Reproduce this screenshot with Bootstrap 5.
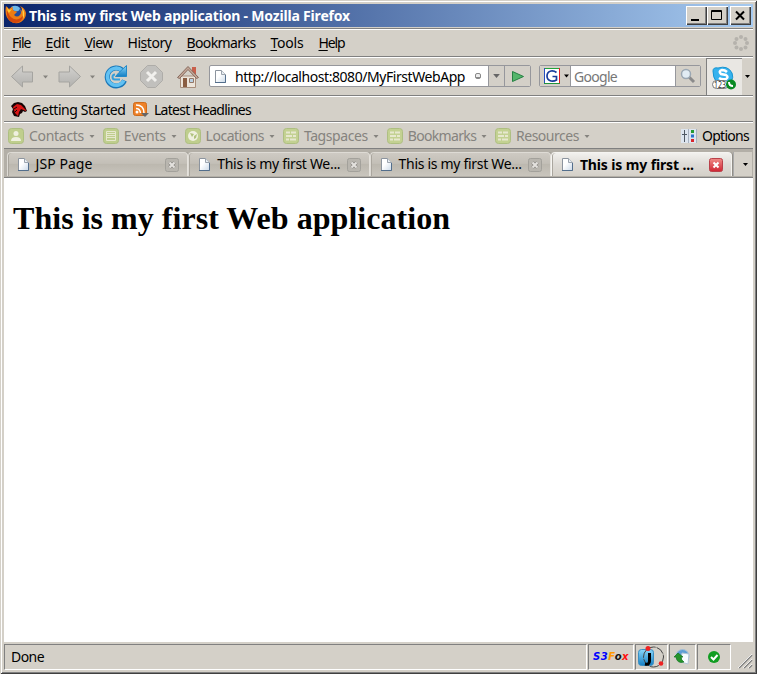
<!DOCTYPE html>
<html lang="en">
<head>
<meta charset="utf-8">
<title>This is my first Web application</title>
<link href="https://cdn.jsdelivr.net/npm/bootstrap@5.3.0/dist/css/bootstrap.min.css" rel="stylesheet">
<style>
body{font:14px/18px "Noto Sans","Open Sans",sans-serif;color:#000;background:#d4d0c8;overflow:hidden}
svg{display:block;flex:none}
.win{width:757px;height:674px;padding:4px 4px 4px 4px;background:#d4d0c8;box-shadow:inset 1px 1px #d4d0c8,inset -1px -1px #404040,inset 2px 2px #fff,inset -2px -2px #808080}
.win>*{flex:none;width:749px}
.lbl{white-space:nowrap;flex:none;display:block;width:max-content}
.titlebar{height:23px;background:linear-gradient(90deg,#0a246a,#a6caf0);color:#fff;font-weight:700;padding-left:1px}
.capbtn{width:21px;height:19px;background:#d4d0c8;box-shadow:inset 1px 1px #fff,inset -1px -1px #404040,inset -2px -2px #808080}
.bar{border-bottom:1px solid #808080;box-shadow:inset 0 1px #fff}
.menurow{height:29px;border-top:1px solid #808080;padding-left:8px}
.menurow .lbl{margin-right:15px}
.menurow u{text-underline-offset:2px;text-decoration-thickness:1px}
.navrow{height:39px}
.urlbox,.searchbox{height:22px;border:1px solid #96979c;border-radius:2px;background:#fff;overflow:hidden}
.urlbox{width:322px;margin-left:10px}
.urlbox .lbl,.searchbox .lbl{position:relative;top:.5px}
.searchbox{width:162px;margin-left:8px}
.cell{background:#d4d0c8;height:20px;display:flex;align-items:center;justify-content:center;flex:none}
.edge{border-left:1px solid #96979c}
.skype{width:36px;height:37px;margin-left:5px;background:#e9e7e3;border-left:1px solid #808080;border-top:1px solid #808080}
.bkrow{height:26px;padding:2px 0 0 7px}
.oprow{height:27px;color:#85837e;padding:2px 0 0 4px}
.oprow .dd{margin:0 7.800px 0 5px}
.tabstrip{height:29px;background:#b3afa7;border-bottom:1px solid #808080;padding:3px 0 2px 3px}
.tabx{height:24px;width:181.300px;flex:none;background:linear-gradient(#cecac3,#c3bfb7 45%,#bcb8af 50%,#c9c5bd);border:1px solid #dedbd5;border-right-color:#e5e2dc;border-bottom:0;border-radius:4px 4px 0 0;box-shadow:1px 0 #918e87,inset 1px 0 #aaa69e;padding-left:9px}
.tabx .lbl{position:relative;top:-1px}
.tabx.on{background:linear-gradient(#f2f1ee,#dedbd6 50%,#d4d0c8);font-weight:700;border-color:#f5f4f1}
.tabx.on .lbl{top:0}
.alltabs{width:19px;height:24px;flex:none;background:#d4d0c8;border-left:1px solid #aaa;margin-left:1px}
.page{height:464px;background:#fff;padding:22px 0 0 9px}
.page h1{font:bold 32px/36px "Liberation Serif",serif;margin:0}
.status{height:27px;padding-top:2px}
.panel{height:26px;border:1px solid #fff;border-top-color:#808080;border-left-color:#808080;margin-right:1px;flex:none}
.s3{font:italic bold 10px/14px "DejaVu Sans",sans-serif}
.s3 b:nth-child(1){color:#00f}.s3 b:nth-child(2){color:#f90}.s3 b:nth-child(3){color:#111}.s3 b:nth-child(4){color:#f11}
</style>
<script src="https://cdn.jsdelivr.net/npm/bootstrap@5.3.0/dist/js/bootstrap.bundle.min.js"></script>
</head>
<body>
<svg width="0" height="0" class="position-absolute">
 <defs>
  <linearGradient id="gy" x2="0" y2="1"><stop stop-color="#d2d1ce"/><stop offset="1" stop-color="#b2b1ae"/></linearGradient>
  <linearGradient id="bl" x2="0" y2="1"><stop stop-color="#8bd7fa"/><stop offset="1" stop-color="#147fc4"/></linearGradient>
  <linearGradient id="rd" x2="0" y2="1"><stop stop-color="#f08c88"/><stop offset="1" stop-color="#cf2432"/></linearGradient>
  <linearGradient id="pg" x2="1" y2="1"><stop offset=".4" stop-color="#fff"/><stop offset="1" stop-color="#cbd9e8"/></linearGradient>
  <symbol id="doc" viewBox="0 0 13 15"><path d="M1.500 1.500h6l4 4v8h-10z" fill="url(#pg)" stroke="#8c949e"/><path d="M7.500 1.500v4h4" fill="#e8edf2" stroke="#9ca4ae"/><path d="M11.500 6v7.500H1" fill="none" stroke="#536e8c"/></symbol>
  <symbol id="dd" viewBox="0 0 5 3"><path d="M0 0h5L2.500 3z" fill="currentColor"/></symbol>
  <symbol id="xg" viewBox="0 0 14 14"><rect x=".5" y=".5" width="13" height="13" rx="2" fill="#b9b6af" stroke="#a3a19b"/><path d="M4.500 4.500l5 5m0-5l-5 5" stroke="#8f8d88" stroke-width="3.500"/><path d="M4.500 4.500l5 5m0-5l-5 5" stroke="#e4e2de" stroke-width="2"/></symbol>
  <symbol id="tag" viewBox="0 0 16 16"><rect x=".5" y=".5" width="15" height="15" rx="3" fill="#c3d192" stroke="#aebf82"/><path d="M3 4.500h4m1 0h5M3 8h6m1 0h3M3 11.500h3m1 0h6" stroke="#e7e8cf" stroke-width="2"/></symbol>
 </defs>
</svg>
<div class="win d-flex flex-column">
 <div class="titlebar d-flex align-items-center">
  <svg width="21" height="20" viewBox="0 0 21 20" class="mb-1"><circle cx="10.500" cy="9.500" r="7.500" fill="#244c9d"/><path d="M6 3q5-3 9 1-1 4-4 3-4 0-5-4" fill="#6fb9e8"/><path d="M1 2l3 3q2-2 4-2-1 2 1 4 3 0 3 1l-3 3q3 3 6 0 2-3 0-5 2 0 2 2 1-3-2-6 5 2 6 7 0 6-5 9-6 3-11-1-6-5-4-15z" fill="#ef7c13"/><path d="M2 6q2 7 7 9 6 2 10-5-2 9-9 9Q1 18 2 6" fill="#d4480c"/><path d="M17 4q4 5 1 11 0-6-1-11" fill="#ffd44a"/><path d="M2 3l2 3 3-1-3 4q-2-2-2-6" fill="#ffc62f"/></svg>
  <span class="lbl" data-w="321" style="margin-left:3px">This is my first Web application - Mozilla Firefox</span>
  <div class="d-flex ms-auto" style="margin-right:2px"><div class="capbtn"><svg width="21" height="19"><path d="M5 14h8" stroke="#000" stroke-width="2"/></svg></div><div class="capbtn"><svg width="21" height="19"><path d="M4.500 4.500h10v9h-10zM4 5.500h11" fill="none" stroke="#000"/></svg></div><div class="capbtn" style="margin-left:2px"><svg width="21" height="19"><path d="M6 5.500l8 8m0-8l-8 8" stroke="#000" stroke-width="2"/></svg></div></div>
 </div>
 <div style="height:1px"></div>
 <div class="bar menurow d-flex align-items-center">
  <span class="lbl" data-w="18.500"><u>F</u>ile</span><span class="lbl" data-w="24"><u>E</u>dit</span><span class="lbl" data-w="28"><u>V</u>iew</span><span class="lbl" data-w="44"><span>Hi</span><u>s</u>tory</span><span class="lbl" data-w="69"><u>B</u>ookmarks</span><span class="lbl" data-w="33"><u>T</u>ools</span><span class="lbl" data-w="26"><u>H</u>elp</span>
  <svg class="ms-auto" style="margin-right:4px" width="16" height="16" fill="#b5b2ac"><circle cx="8" cy="2" r="2"/><circle cx="12.500" cy="4" r="2"/><circle cx="14" cy="8" r="2"/><circle cx="12.500" cy="12.500" r="2"/><circle cx="8" cy="14" r="2"/><circle cx="3.500" cy="12.500" r="2"/><circle cx="2" cy="8" r="2"/><circle cx="3.500" cy="4" r="2"/></svg>
 </div>
 <div class="bar navrow d-flex align-items-center">
  <svg width="195" height="38" viewBox="4 57 195 38">
   <g fill="url(#gy)" stroke="#a5a4a0"><path d="M11.500 76.500L22.500 66v6h10v10h-10v5z"/><path d="M80.500 76.500L69.500 66v6h-10.500v10h10.500v5z"/></g>
   <path d="M43 75.500h5l-2.500 3zM90 75.500h5l-2.500 3z" fill="#85837e"/>
   <path d="M122.500 70.500a9 9 0 1 0 2 10" fill="none" stroke="#1977b8" stroke-width="5"/><path d="M122 70.500a8.600 8.600 0 1 0 1.800 10" fill="none" stroke="#62c1f2" stroke-width="3.500"/><path d="M126.500 65.500v11h-11l3.500-4z" fill="url(#bl)" stroke="#2489c7"/><path d="M120 79.500h-5a2.500 2.500 0 0 1 0-5" fill="none" stroke="#379fdb" stroke-width="2"/>
   <path d="M147.500 65.500h8l7 7v8l-7 7h-8l-7-7v-8z" fill="#c1c0bd" stroke="#aeaca8"/><path d="M147 72l9 9m0-9l-9 9" stroke="#f1f0ed" stroke-width="3"/>
   <path d="M192 67h4v7h-4z" fill="#c9604c"/><path d="M180.500 76h15v11.500h-15z" fill="#ece4da" stroke="#a88e7c"/><path d="M177.500 77.500L188 66.500l10.500 11-2 1-8.500-9-8.500 9z" fill="#c4a797" stroke="#86695d"/><path d="M183 78h4v9h-4z" fill="#8a5d42"/><path d="M189.500 78.500h4v4h-4z" fill="#b8d0e3" stroke="#947767"/>
  </svg>
  <div class="urlbox d-flex align-items-center">
   <svg width="13" height="15" class="ms-1"><use href="#doc"/></svg>
   <span class="lbl" data-w="230" style="margin-left:8px">http://localhost:8080/MyFirstWebApp</span>
   <svg width="8" height="8" style="margin-left:9px;margin-right:auto"><rect x="1.500" y="1.500" width="5" height="5" rx="1.500" fill="#eee" stroke="#888"/><path d="M2 5.500h4" stroke="#888"/></svg>
   <div class="cell edge" style="width:16px;color:#666"><svg width="7" height="4"><use href="#dd"/></svg></div>
   <div class="cell edge" style="width:26px"><svg width="14" height="13"><path d="M1.500 1.500l11 5-11 5z" fill="#55b66b" stroke="#268043"/></svg></div>
  </div>
  <div class="searchbox d-flex align-items-center">
   <div class="cell" style="width:30px"><svg width="28" height="18"><path d="M3 1h16v16H3z" fill="#fff"/><path d="M3 1.500h15" stroke="#23a33b"/><path d="M3.500 1v16" stroke="#2450c0"/><path d="M18.500 1v15" stroke="#e31b23"/><path d="M3 16.500h16" stroke="#22933b"/><path d="M15.500 5.500q-2.500-2-5.500-1.500-4 1-4 5t4 5q3 .5 5.500-1V9.500h-4" fill="none" stroke="#183d9b" stroke-width="1.700"/><path d="M23 7.500h5l-2.500 3z"/></svg></div>
   <div class="edge h-100 d-flex align-items-center flex-fill" style="color:#777"><span class="lbl" data-w="43" style="margin-left:3px">Google</span></div>
   <div class="cell edge" style="width:25px"><svg width="18" height="18"><path d="M9 9l6 6" stroke="#8b8b8b" stroke-width="3"/><circle cx="7" cy="7" r="4.500" fill="#e1ecf4" stroke="#9ba8b4" stroke-width="1.500"/></svg></div>
  </div>
  <div class="skype"><svg width="35" height="35" viewBox="0 0 35 35"><path d="M6 12q0-4 5-3 10-3 14 5 2 4-1 9 1 6-6 4Q6 25 6 12z" fill="#35b2ee" stroke="#1794d1"/><path d="M20 13q-2-2-5-2-4 1-1 4l5 1q3 2 0 4-4 1-7-1" fill="none" stroke="#fff" stroke-width="2.500"/><rect x="5.500" y="21.500" width="16" height="8" rx="4" fill="#fff" stroke="#777"/><text x="7" y="28.500" font-size="8" textLength="12" lengthAdjust="spacingAndGlyphs" fill="#333">123</text><circle cx="24" cy="25.500" r="5" fill="#098a23"/><path d="M22 23q0 4 4 4" fill="none" stroke="#fff" stroke-width="2"/></svg></div>
  <svg width="5" height="3" style="margin-left:3px"><use href="#dd"/></svg>
 </div>
 <div class="bar bkrow d-flex align-items-center">
  <svg width="16" height="16"><path d="M0 4l3-3 4-1 4 1 3 3 2 5-2 1-2-1-1 2-2 1-1 3-5-1-2-4 1-3z" fill="#160505"/><path d="M2 5l4-3 4 1 5 5v1l-5-2-2 3-1 4-3-3z" fill="#d91515"/><path d="M3 7l3-2M4 10l2-2" stroke="#160505"/></svg>
  <span class="lbl" data-w="94" style="margin-left:4.500px">Getting Started</span>
  <svg width="16" height="16" style="margin-left:7.500px"><rect x=".5" y=".5" width="13" height="13" rx="2" fill="#ee8128" stroke="#cf6b1b"/><circle cx="4" cy="10" r="1.500" fill="#fff"/><path d="M3 6.500q4 0 4.500 4.500M3 3q8 0 8 8" fill="none" stroke="#fff" stroke-width="1.500"/><path d="M8 11h8l-4 4z" fill="#666"/></svg>
  <span class="lbl" data-w="97" style="margin-left:5px">Latest Headlines</span>
 </div>
 <div class="bar oprow d-flex align-items-center">
  <svg width="16" height="16"><rect x=".5" y=".5" width="15" height="15" rx="3" fill="#bfce8d" stroke="#aebf82"/><circle cx="8" cy="5.500" r="2.500" fill="#eff0df"/><path d="M3 13q0-4 5-4t5 4z" fill="#eff0df"/></svg>
  <span class="lbl" data-w="55" style="margin-left:5px">Contacts</span><svg class="dd" width="6" height="3"><use href="#dd"/></svg>
  <svg width="16" height="16"><rect x=".5" y=".5" width="15" height="15" rx="3" fill="#bfce8d" stroke="#aebf82"/><path d="M3.500 3.500h9v9h-9zM3 5.500h10M3 7.500h10M3 9.500h10" fill="none" stroke="#e7e8cf"/></svg>
  <span class="lbl" data-w="42" style="margin-left:5px">Events</span><svg class="dd" width="6" height="3"><use href="#dd"/></svg>
  <svg width="16" height="16"><rect x=".5" y=".5" width="15" height="15" rx="3" fill="#bfce8d" stroke="#aebf82"/><circle cx="8" cy="8" r="5" fill="#eff0df"/><path d="M5 5l4 1-2 3zM9 8l3-2-1 4-2 1z" fill="#afc27c"/></svg>
  <span class="lbl" data-w="58.500" style="margin-left:5px">Locations</span><svg class="dd" width="6" height="3"><use href="#dd"/></svg>
  <svg width="16" height="16"><use href="#tag"/></svg><span class="lbl" data-w="64" style="margin-left:5px">Tagspaces</span><svg class="dd" width="6" height="3"><use href="#dd"/></svg>
  <svg width="16" height="16"><use href="#tag"/></svg><span class="lbl" data-w="68.500" style="margin-left:5px">Bookmarks</span><svg class="dd" width="6" height="3"><use href="#dd"/></svg>
  <svg width="16" height="16"><use href="#tag"/></svg><span class="lbl" data-w="63" style="margin-left:5px">Resources</span><svg class="dd" width="6" height="3"><use href="#dd"/></svg>
  <svg class="ms-auto" width="16" height="16"><path d="M0 1h16v14H0z" fill="#dde5ef"/><path d="M3.500 2v12M1 6.500h5" stroke="#4f5964"/><path d="M7.500 1v14M15.500 1v14" stroke="#a8b2c0"/><path d="M10 2h3v3h-3z" fill="#259c32"/><path d="M10 6.500h3v3h-3z" fill="#2974c9"/><path d="M10 11h3v3h-3z" fill="#d9262c"/></svg>
  <span class="lbl text-black" data-w="47" style="margin:0 4px 0 5px">Options</span>
 </div>
 <div class="tabstrip d-flex">
  <div class="tabx d-flex align-items-center"><svg width="13" height="15"><use href="#doc"/></svg><span class="lbl" data-w="57" style="margin-left:5.500px">JSP Page</span><svg class="ms-auto" style="margin-right:8px" width="14" height="14"><use href="#xg"/></svg></div>
  <div class="tabx d-flex align-items-center"><svg width="13" height="15"><use href="#doc"/></svg><span class="lbl" data-w="123" style="margin-left:6px">This is my first We...</span><svg class="ms-auto" style="margin-right:8px" width="14" height="14"><use href="#xg"/></svg></div>
  <div class="tabx d-flex align-items-center"><svg width="13" height="15"><use href="#doc"/></svg><span class="lbl" data-w="123" style="margin-left:6px">This is my first We...</span><svg class="ms-auto" style="margin-right:8px" width="14" height="14"><use href="#xg"/></svg></div>
  <div class="tabx on d-flex align-items-center"><svg width="13" height="15"><use href="#doc"/></svg><span class="lbl" data-w="114" style="margin-left:6px">This is my first ...</span><svg class="ms-auto" style="margin-right:8px" width="14" height="14"><rect x=".5" y=".5" width="13" height="13" rx="2" fill="url(#rd)" stroke="#b9414a"/><path d="M4.500 4.500l5 5m0-5l-5 5" stroke="#fff" stroke-width="2"/></svg></div>
  <div class="alltabs d-flex align-items-center justify-content-center"><svg width="5" height="3" class="ms-1"><use href="#dd"/></svg></div>
 </div>
 <div class="page"><h1 class="lbl d-inline-block" data-w="437">This is my first Web application</h1></div>
 <div class="status d-flex">
  <div class="panel d-flex align-items-center flex-fill"><span class="lbl" data-w="33" style="margin-left:6px">Done</span></div>
  <div class="panel d-flex align-items-center justify-content-center" style="width:46px"><span class="s3 lbl" data-w="36"><b>S3</b><b>F</b><b>o</b><b>x</b></span></div>
  <div class="panel" style="width:33px"><svg width="31" height="24"><rect x="2.500" y="4.500" width="15" height="16" rx="3" fill="url(#bl)" stroke="#3b8fc2"/><circle cx="17.500" cy="12" r="10" fill="none" stroke="#444" stroke-dasharray="9 1"/><path d="M13.500 8v8q0 4-4.500 3" fill="none" stroke="#000" stroke-width="3"/><circle cx="12" cy="3.500" r="2.500" fill="#e22"/><circle cx="25" cy="18.500" r="2.300" fill="#e22"/></svg></div>
  <div class="panel" style="width:27px"><svg width="25" height="24"><circle cx="12.500" cy="11" r="6.500" fill="#5d9fd6" stroke="#a5bfd6"/><path d="M12 8l7 1-1 10-7-2z" fill="#f7fbff" stroke="#b1c5d6"/><path d="M4 12l4-4 5 4h-2q0 3 3 5-7 2-8-5z" fill="#26952b" stroke="#12751c" stroke-width=".7"/></svg></div>
  <div class="panel d-flex align-items-center justify-content-center" style="width:34px"><svg width="14" height="14"><circle cx="7" cy="7" r="6" fill="#119d22"/><path d="M4 7l2.500 2.500L10.500 5" fill="none" stroke="#fff" stroke-width="2"/></svg></div>
  <svg width="21" height="25"><path d="M7 24L20 11M12 24l8-8M17 24l3-3" stroke="#808080" stroke-width="1.700"/><path d="M6 24L20 10M11 24l9-9M16 24l4-4" stroke="#fff" stroke-width=".8"/></svg>
 </div>
</div>
<script>
// Spread each label's letters over its nominal width.
document.querySelectorAll('[data-w]').forEach(function(e){
  var r=e.getBoundingClientRect().width,n=e.textContent.length,w=+e.dataset.w;
  e.style.letterSpacing=((w-r)/n).toFixed(3)+'px';
  e.style.width=w+'px';
});
</script>
</body>
</html>
